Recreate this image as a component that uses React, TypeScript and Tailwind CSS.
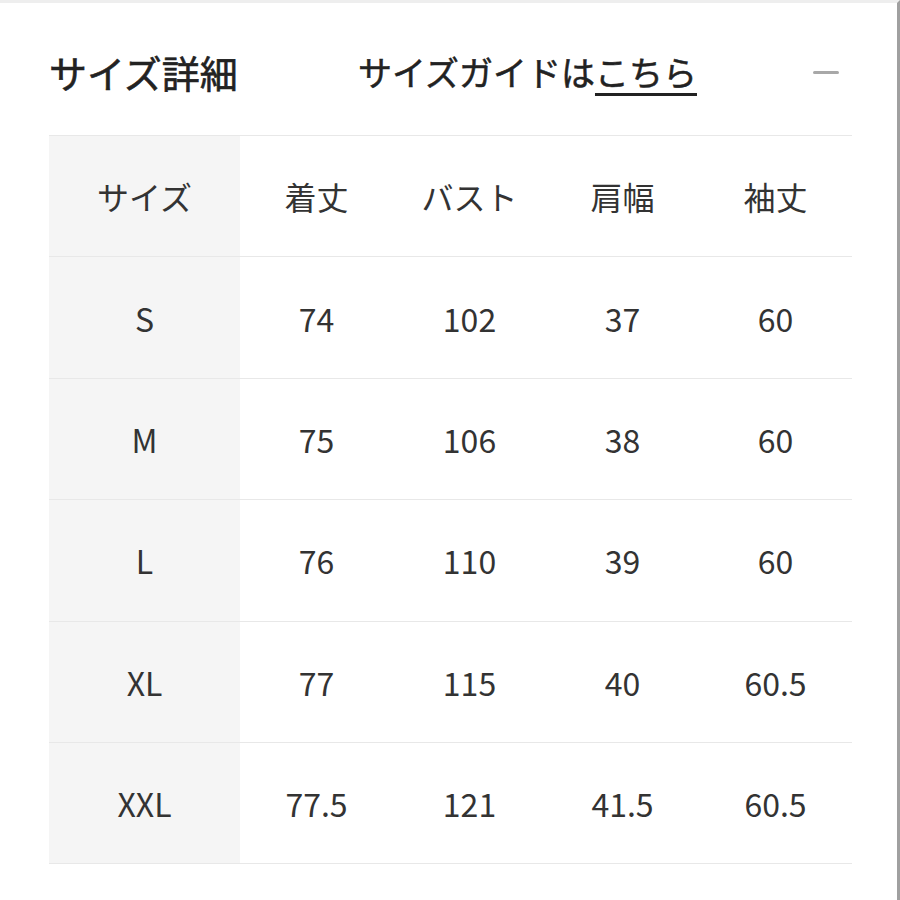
import React from 'react';

const headers = ['サイズ', '着丈', 'バスト', '肩幅', '袖丈'];

const rows = [
  ['S', '74', '102', '37', '60'],
  ['M', '75', '106', '38', '60'],
  ['L', '76', '110', '39', '60'],
  ['XL', '77', '115', '40', '60.5'],
  ['XXL', '77.5', '121', '41.5', '60.5'],
];

const Row: React.FC<{ cells: string[] }> = ({ cells }) => (
  <div className="grid grid-cols-[191px_repeat(4,153px)] h-[121.4px] border-b-[1.5px] border-[#e8e8e8]">
    {cells.map((c, i) => (
      <div
        key={i}
        className={`flex items-center justify-center text-[32px] text-[#333] ${i === 0 ? 'bg-[#f5f5f5]' : ''}`}
      >
        {c}
      </div>
    ))}
  </div>
);

export default function App() {
  return (
    <div
      className="w-[900px] h-[900px] overflow-hidden bg-white border-t-[3px] border-t-[#eeeeee] border-r-[3px] border-r-[#a0a0a0]"
      style={{ fontFamily: '"Noto Sans CJK JP", "Noto Sans", sans-serif' }}
    >
      <div className="pl-[49px]">
        {/* Header */}
        <div className="w-[803px] h-[132px] pt-[6px] flex items-center text-[#222]">
          <div className="w-[309px] text-[38px] leading-none [-webkit-text-stroke:0.6px_#222]">サイズ詳細</div>
          <div className="text-[34px] leading-none [-webkit-text-stroke:0.5px_#222]">
            サイズガイドは
            <span className="underline decoration-[2.5px] underline-offset-[7px]">こちら</span>
          </div>
          <div className="ml-auto mr-[13px] w-[26px] h-[3px] bg-[#a8a8a8] rounded-full" />
        </div>

        {/* Table */}
        <div className="w-[803px] border-t-[1.5px] border-[#e8e8e8]">
          <Row cells={headers} />
          {rows.map((r) => (
            <Row key={r[0]} cells={r} />
          ))}
        </div>
      </div>
    </div>
  );
}
